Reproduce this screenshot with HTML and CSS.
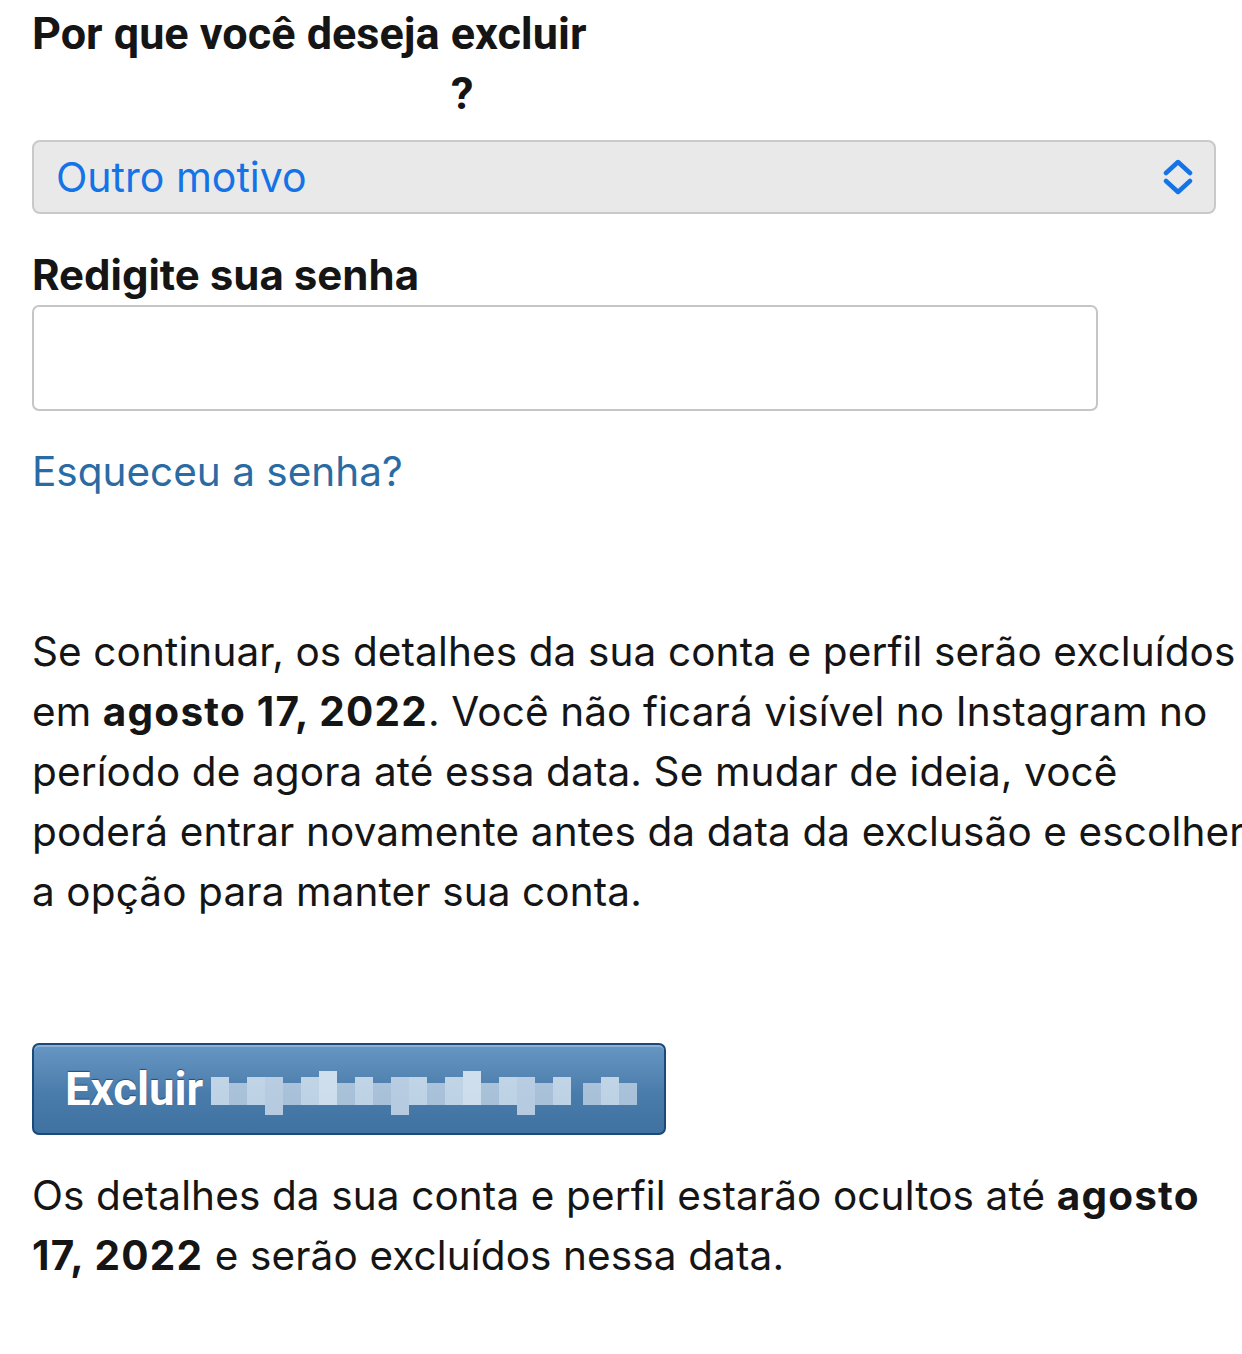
FILE: index.html
```html
<!DOCTYPE html>
<html lang="pt-BR">
<head>
<meta charset="utf-8">
<title>Excluir conta</title>
<link rel="stylesheet" href="styles.css">
</head>
<body>
<main class="page">
  <h1 class="question">Por que você deseja excluir <span class="hidden-user">nome_usuario</span>?</h1>

  <div class="select">
    <span class="select-value">Outro motivo</span>
    <svg class="chevrons" width="32" height="36" viewBox="0 0 32 36" aria-hidden="true">
      <path d="M4 14 L16 3 L28 14" fill="none" stroke="#1473e6" stroke-width="4.5" stroke-linecap="round" stroke-linejoin="round"/>
      <path d="M4 22 L16 33 L28 22" fill="none" stroke="#1473e6" stroke-width="4.5" stroke-linecap="round" stroke-linejoin="round"/>
    </svg>
  </div>

  <label class="label">Redigite sua senha</label>
  <div class="input"></div>

  <a class="forgot">Esqueceu a senha?</a>

  <p class="text main-text">Se continuar, os detalhes da sua conta e perfil serão excluídos<br>em <b>agosto 17, 2022</b>. Você não ficará visível no Instagram no<br>período de agora até essa data. Se mudar de ideia, você<br>poderá entrar novamente antes da data da exclusão e escolher<br>a opção para manter sua conta.</p>

  <div class="button">
    <span class="button-label">Excluir</span>
    <span class="pixels">
      <i class="px h1"></i><i class="px h2"></i><i class="px h1"></i><i class="px h3"></i><i class="px h2"></i><i class="px h1"></i><i class="px h4"></i><i class="px h2"></i><i class="px h1"></i><i class="px h2"></i><i class="px h3"></i><i class="px h1"></i><i class="px h2"></i><i class="px h1"></i><i class="px h4"></i><i class="px h2"></i><i class="px h1"></i><i class="px h3"></i><i class="px h2"></i><i class="px h1"></i><i class="px gap"></i><i class="px h2"></i><i class="px h1"></i><i class="px h2"></i>
    </span>
  </div>

  <p class="text foot-text">Os detalhes da sua conta e perfil estarão ocultos até <b>agosto</b><br><b>17, 2022</b> e serão excluídos nessa data.</p>
</main>
</body>
</html>
```

FILE: styles.css
```css
html, body {
  margin: 0;
  padding: 0;
  background: #ffffff;
  overflow: hidden;
}

.page {
  width: 1400px;
  padding: 4px 0 0 32px;
  font-family: Inter, "Noto Sans", sans-serif;
  color: #111111;
}

.question {
  margin: 0;
  width: 640px;
  font-family: Roboto, "Liberation Sans", sans-serif;
  font-weight: 700;
  font-size: 45px;
  line-height: 60px;
  color: #151515;
}

.hidden-user {
  display: inline-block;
  width: 419px;
  color: transparent;
}

.select {
  margin-top: 16px;
  width: 1184px;
  height: 74px;
  box-sizing: border-box;
  border: 2px solid #c9c9c9;
  border-radius: 8px;
  background: #e9e9e9;
  display: flex;
  align-items: center;
  justify-content: space-between;
  padding: 0 20px 0 22px;
}

.select-value {
  font-family: Inter, "Noto Sans", sans-serif;
  font-size: 41px;
  color: #1473e6;
}

.chevrons {
  display: block;
}

.label {
  display: block;
  margin-top: 30px;
  font-weight: 700;
  font-size: 42px;
  line-height: 61px;
  color: #151515;
}

.input {
  width: 1066px;
  height: 106px;
  box-sizing: border-box;
  border: 2px solid #c6c6c6;
  border-radius: 7px;
  background: #ffffff;
}

.forgot {
  display: block;
  margin-top: 31px;
  font-family: Inter, "Noto Sans", sans-serif;
  font-size: 40.5px;
  line-height: 60px;
  color: #2b6ba4;
}

.text {
  margin: 0;
  width: 1340px;
  white-space: nowrap;
  font-size: 40.5px;
  line-height: 60px;
  letter-spacing: 0.12px;
  color: #151515;
}

.text b {
  font-weight: 700;
  letter-spacing: 1.2px;
}

.main-text {
  margin-top: 120px;
}

.button {
  margin-top: 121px;
  width: 634px;
  height: 92px;
  box-sizing: border-box;
  border: 2px solid #1b4a7a;
  border-radius: 7px;
  background: linear-gradient(#6796c3, #4a7cab 55%, #3f71a1);
  box-shadow: inset 0 2px 0 rgba(255, 255, 255, 0.25);
  display: flex;
  align-items: center;
  padding: 0 0 0 31px;
}

.button-label {
  font-family: Roboto, "Liberation Sans", sans-serif;
  font-weight: 700;
  font-size: 45.5px;
  color: #ffffff;
  text-shadow: 0 -1px 1px rgba(0, 40, 80, 0.6);
}

.pixels {
  display: flex;
  align-items: flex-start;
  margin-left: 8px;
  height: 40px;
  padding-top: 4px;
}

.px {
  display: block;
  width: 18px;
  background: rgba(220, 232, 244, 0.8);
}

.px.h1 { height: 28px; margin-top: 6px; }
.px.h2 { height: 22px; margin-top: 12px; background: rgba(200, 216, 232, 0.75); }
.px.h3 { height: 38px; margin-top: 6px; background: rgba(210, 224, 238, 0.8); }
.px.h4 { height: 34px; margin-top: 0; background: rgba(228, 238, 248, 0.85); }
.px.gap { height: 28px; margin-top: 6px; background: transparent; width: 12px; }

.foot-text {
  margin-top: 31px;
}
```
